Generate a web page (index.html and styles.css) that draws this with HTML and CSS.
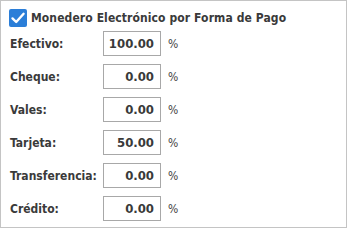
FILE: index.html
```html
<!DOCTYPE html>
<html>
<head>
<meta charset="utf-8">
<link rel="stylesheet" href="styles.css">
</head>
<body>
<div class="panel">
  <div class="title">
    <span class="check"><svg width="18" height="18" viewBox="0 0 18 18"><rect x="0" y="0" width="18" height="18" rx="2" fill="#2b7ed8"/><path d="M3.5 9.4 L7.2 13 L14.6 4.8" fill="none" stroke="#fff" stroke-width="2.4" stroke-linecap="round" stroke-linejoin="round"/></svg></span>
    <span class="title-text">Monedero Electrónico por Forma de Pago</span>
  </div>
  <div class="rows">
    <div class="lbl">Efectivo:</div><div class="box">100.00</div><div class="pct">%</div>
    <div class="lbl">Cheque:</div><div class="box">0.00</div><div class="pct">%</div>
    <div class="lbl">Vales:</div><div class="box">0.00</div><div class="pct">%</div>
    <div class="lbl">Tarjeta:</div><div class="box">50.00</div><div class="pct">%</div>
    <div class="lbl">Transferencia:</div><div class="box">0.00</div><div class="pct">%</div>
    <div class="lbl">Crédito:</div><div class="box">0.00</div><div class="pct">%</div>
  </div>
</div>
</body>
</html>
```
FILE: styles.css
```css
html, body { margin: 0; padding: 0; background: #fff; }
body { width: 348px; height: 229px; overflow: hidden; font-family: "DejaVu Sans Condensed", "DejaVu Sans", sans-serif; color: #333; }
.panel {
  box-sizing: border-box;
  width: 347px; height: 228px;
  border: 1px solid #c4c4c4;
  background: #fff;
  padding: 8px 0 0 8px;
}
.title { display: flex; align-items: center; height: 18px; }
.check { display: block; width: 18px; height: 18px; }
.check svg { display: block; }
.title-text { margin-left: 4px; font-weight: bold; font-size: 12px; letter-spacing: 0.1px; color: #3a3a3a; }
.rows {
  display: grid;
  grid-template-columns: 94px 58px auto;
  grid-auto-rows: 25px;
  row-gap: 8px;
  margin-top: 4px;
  align-items: center;
}
.lbl { font-weight: bold; font-size: 12px; color: #3a3a3a; padding-left: 1px; }
.box {
  box-sizing: border-box; height: 25px;
  border: 1px solid #a8a8a8;
  text-align: right; padding-right: 6px;
  font-weight: bold; font-size: 13px; line-height: 23px; color: #3a3a3a;
}
.pct { padding-left: 7px; font-size: 12px; color: #444; }
```
